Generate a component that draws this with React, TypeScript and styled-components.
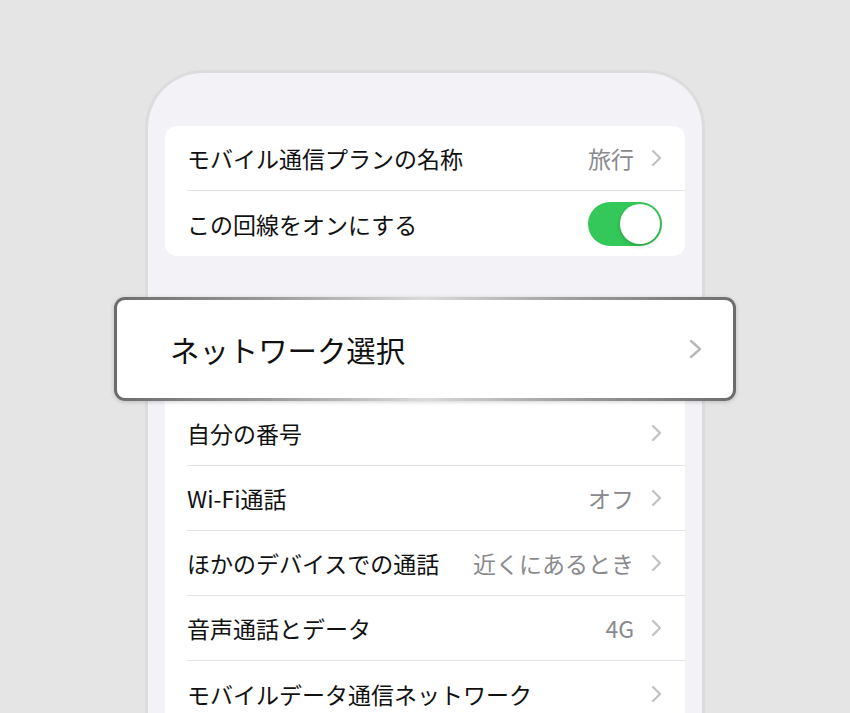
import { createGlobalStyle, styled } from 'styled-components'

const GlobalStyle = createGlobalStyle`
    html, body {
        margin: 0;
        height: 100%;
        overflow: hidden;
        background: #e5e5e5;
    }
    body {
        font-family: 'Noto Sans CJK JP', 'Noto Sans', sans-serif;
        -webkit-font-smoothing: antialiased;
    }
`

function Chevron({ size = 'small' }: { size?: 'small' | 'large' }) {
    const w = size === 'large' ? 13 : 11
    const h = size === 'large' ? 20 : 18
    return (
        <ChevronSvg width={w} height={h} viewBox={`0 0 ${w} ${h}`} $large={size === 'large'}>
            <path
                d={`M2 2 L${w - 2} ${h / 2} L2 ${h - 2}`}
                fill="none"
                strokeWidth={2.4}
                strokeLinecap="round"
                strokeLinejoin="round"
            />
        </ChevronSvg>
    )
}

type RowData = { label: string; value?: string }

const topRows: RowData[] = [{ label: 'モバイル通信プランの名称', value: '旅行' }]

const bottomRows: RowData[] = [
    { label: '自分の番号' },
    { label: 'Wi-Fi通話', value: 'オフ' },
    { label: 'ほかのデバイスでの通話', value: '近くにあるとき' },
    { label: '音声通話とデータ', value: '4G' },
    { label: 'モバイルデータ通信ネットワーク' },
]

function SettingRow({ label, value }: RowData) {
    return (
        <Row>
            <Label>{label}</Label>
            <Trail>
                {value && <Value>{value}</Value>}
                <Chevron />
            </Trail>
        </Row>
    )
}

export default function App() {
    return (
        <>
            <GlobalStyle />
            <Page>
                <Phone>
                    <Group>
                        {topRows.map((r) => (
                            <SettingRow key={r.label} {...r} />
                        ))}
                        <Row>
                            <Label>この回線をオンにする</Label>
                            <Toggle>
                                <Knob />
                            </Toggle>
                        </Row>
                    </Group>

                    <Highlight>
                        <HighlightInner>
                            <BigLabel>ネットワーク選択</BigLabel>
                            <Chevron size="large" />
                        </HighlightInner>
                    </Highlight>

                    <Group $flatTop>
                        {bottomRows.map((r) => (
                            <SettingRow key={r.label} {...r} />
                        ))}
                    </Group>
                </Phone>
            </Page>
        </>
    )
}

const Page = styled.div`
    display: flex;
    justify-content: center;
    align-items: flex-start;
    padding-top: 70px;
    height: 713px;
    box-sizing: border-box;
`

const Phone = styled.div`
    width: 560px;
    min-height: 643px;
    box-sizing: border-box;
    background: #f2f2f7;
    border: 3px solid #dcdcdd;
    border-bottom: none;
    border-radius: 58px 58px 0 0;
    padding: 53px 17px 0;
    display: flex;
    flex-direction: column;
`

const Group = styled.div<{ $flatTop?: boolean }>`
    flex-shrink: 0;
    background: #ffffff;
    border-radius: ${({ $flatTop }) => ($flatTop ? '0 0 12px 12px' : '12px')};
    padding-left: 22px;
    display: flex;
    flex-direction: column;
`

const Row = styled.div`
    flex-shrink: 0;
    height: 65px;
    box-sizing: border-box;
    display: flex;
    align-items: center;
    justify-content: space-between;
    padding-right: 23px;
    border-bottom: 1.5px solid #e3e3e6;

    &:last-child {
        border-bottom: none;
    }
`

const Label = styled.span`
    font-size: 23px;
    color: #111111;
    white-space: nowrap;
`

const Trail = styled.div`
    display: flex;
    align-items: center;
    gap: 17px;
`

const Value = styled.span`
    font-size: 23px;
    color: #8a8a8e;
    white-space: nowrap;
`

const ChevronSvg = styled.svg<{ $large: boolean }>`
    display: block;
    stroke: ${({ $large }) => ($large ? '#b9b9bc' : '#c4c4c7')};
`

const Toggle = styled.div`
    width: 74px;
    height: 44px;
    border-radius: 22px;
    background: #34c759;
    display: flex;
    align-items: center;
    justify-content: flex-end;
    padding: 2px;
    box-sizing: border-box;
`

const Knob = styled.div`
    width: 40px;
    height: 40px;
    border-radius: 50%;
    background: #ffffff;
    box-shadow: 0 2px 4px rgba(0, 0, 0, 0.18);
`

const Highlight = styled.div`
    flex-shrink: 0;
    position: relative;
    z-index: 1;
    margin: 41px -51px 0;
    padding: 3px;
    height: 104px;
    box-sizing: border-box;
    border-radius: 11px;
    background: linear-gradient(90deg, #6c6c6c 0%, #9a9a9a 25%, #dadada 50%, #9a9a9a 75%, #6c6c6c 100%);
    box-shadow: 0 1px 4px rgba(0, 0, 0, 0.18);
`

const HighlightInner = styled.div`
    height: 100%;
    border-radius: 8px;
    background: #ffffff;
    display: flex;
    align-items: center;
    justify-content: space-between;
    padding: 0 31px 0 53px;
    box-sizing: border-box;
`

const BigLabel = styled.span`
    font-size: 29.4px;
    color: #111111;
    white-space: nowrap;
`
